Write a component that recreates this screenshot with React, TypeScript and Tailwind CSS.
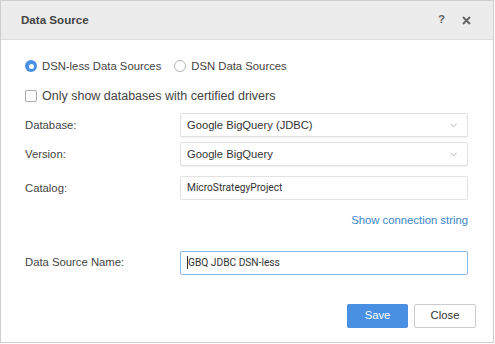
import { ChevronDown } from 'lucide-react'

const font = { fontFamily: '"Liberation Sans", Arial, sans-serif' }
const small = { fontFamily: 'Roboto, sans-serif' }

const Radio = ({ checked, label }: { checked?: boolean; label: string }) => (
  <label className="flex items-center gap-[5px]">
    {checked ? (
      <span className="w-[12px] h-[12px] rounded-full bg-[#4a90e2] flex items-center justify-center">
        <span className="w-[5px] h-[5px] rounded-full bg-white" />
      </span>
    ) : (
      <span className="w-[12px] h-[12px] rounded-full border border-[#b5b5b5] bg-white" />
    )}
    <span>{label}</span>
  </label>
)

const Select = ({ value }: { value: string }) => (
  <div className="w-[288px] h-[24px] border border-[#e2e2e2] rounded-[2px] shadow-[0_1px_1px_rgba(0,0,0,0.06)] flex items-center justify-between pl-[6px] pr-[8px] bg-white">
    <span className="text-[11.2px] text-[#333]">{value}</span>
    <ChevronDown size={11} strokeWidth={1.5} className="text-[#999]" />
  </div>
)

export default function App() {
  return (
    <div className="w-[495px] h-[344px] bg-white" style={font}>
      <div className="w-[494px] h-[343px] border border-[#cfcfcf] flex flex-col">
        <div className="h-[39px] shrink-0 bg-[#ececec] border-b border-[#dcdcdc] flex items-center justify-between pl-[20px] pr-[22px]">
          <span className="text-[11.6px] font-bold text-[#444]">Data Source</span>
          <div className="flex items-center gap-[17px] text-[#666]">
            <span className="text-[11.5px] font-bold">?</span>
            <svg width="9" height="9" viewBox="0 0 9 9">
              <path d="M1 1 L8 8 M8 1 L1 8" stroke="#666" strokeWidth="2" />
            </svg>
          </div>
        </div>

        <div className="flex flex-col pl-[24px] pr-[24px] pt-[18px] text-[11.3px] text-[#444]">
          <div className="h-[16px] flex items-center gap-[13px]">
            <Radio checked label="DSN-less Data Sources" />
            <Radio label="DSN Data Sources" />
          </div>

          <label className="mt-[14px] h-[16px] flex items-center gap-[5px]">
            <span className="w-[12px] h-[12px] rounded-[2px] border border-[#a8a8a8] bg-white" />
            <span className="text-[12.5px]">Only show databases with certified drivers</span>
          </label>

          <div className="mt-[9px] flex items-center">
            <span className="w-[155px]">Database:</span>
            <Select value="Google BigQuery (JDBC)" />
          </div>
          <div className="mt-[5px] flex items-center">
            <span className="w-[155px]">Version:</span>
            <Select value="Google BigQuery" />
          </div>
          <div className="mt-[10px] flex items-center">
            <span className="w-[155px]">Catalog:</span>
            <div className="w-[288px] h-[24px] border border-[#e2e2e2] rounded-[2px] flex items-center pl-[6px] bg-white">
              <span className="text-[10.2px] text-[#333]" style={small}>
                MicroStrategyProject
              </span>
            </div>
          </div>

          <div className="mt-[12px] flex justify-end w-[443px]">
            <span className="text-[#3a86c8]">Show connection string</span>
          </div>

          <div className="mt-[22px] flex items-center">
            <span className="w-[155px]">Data Source Name:</span>
            <div className="w-[288px] h-[24px] border border-[#8bb5e8] rounded-[2px] flex items-center pl-[6px] bg-white">
              <span className="w-px h-[13px] bg-[#333]" />
              <span className="text-[10.2px] text-[#333]" style={small}>
                GBQ JDBC DSN-less
              </span>
            </div>
          </div>

          <div className="mt-[29px] flex justify-end gap-[6px] w-[451px]">
            <button className="w-[61px] h-[24px] rounded-[2px] bg-[#4a90e2] text-white">Save</button>
            <button className="w-[62px] h-[24px] rounded-[2px] border border-[#cccccc] bg-white text-[#333]">
              Close
            </button>
          </div>
        </div>
      </div>
    </div>
  )
}
